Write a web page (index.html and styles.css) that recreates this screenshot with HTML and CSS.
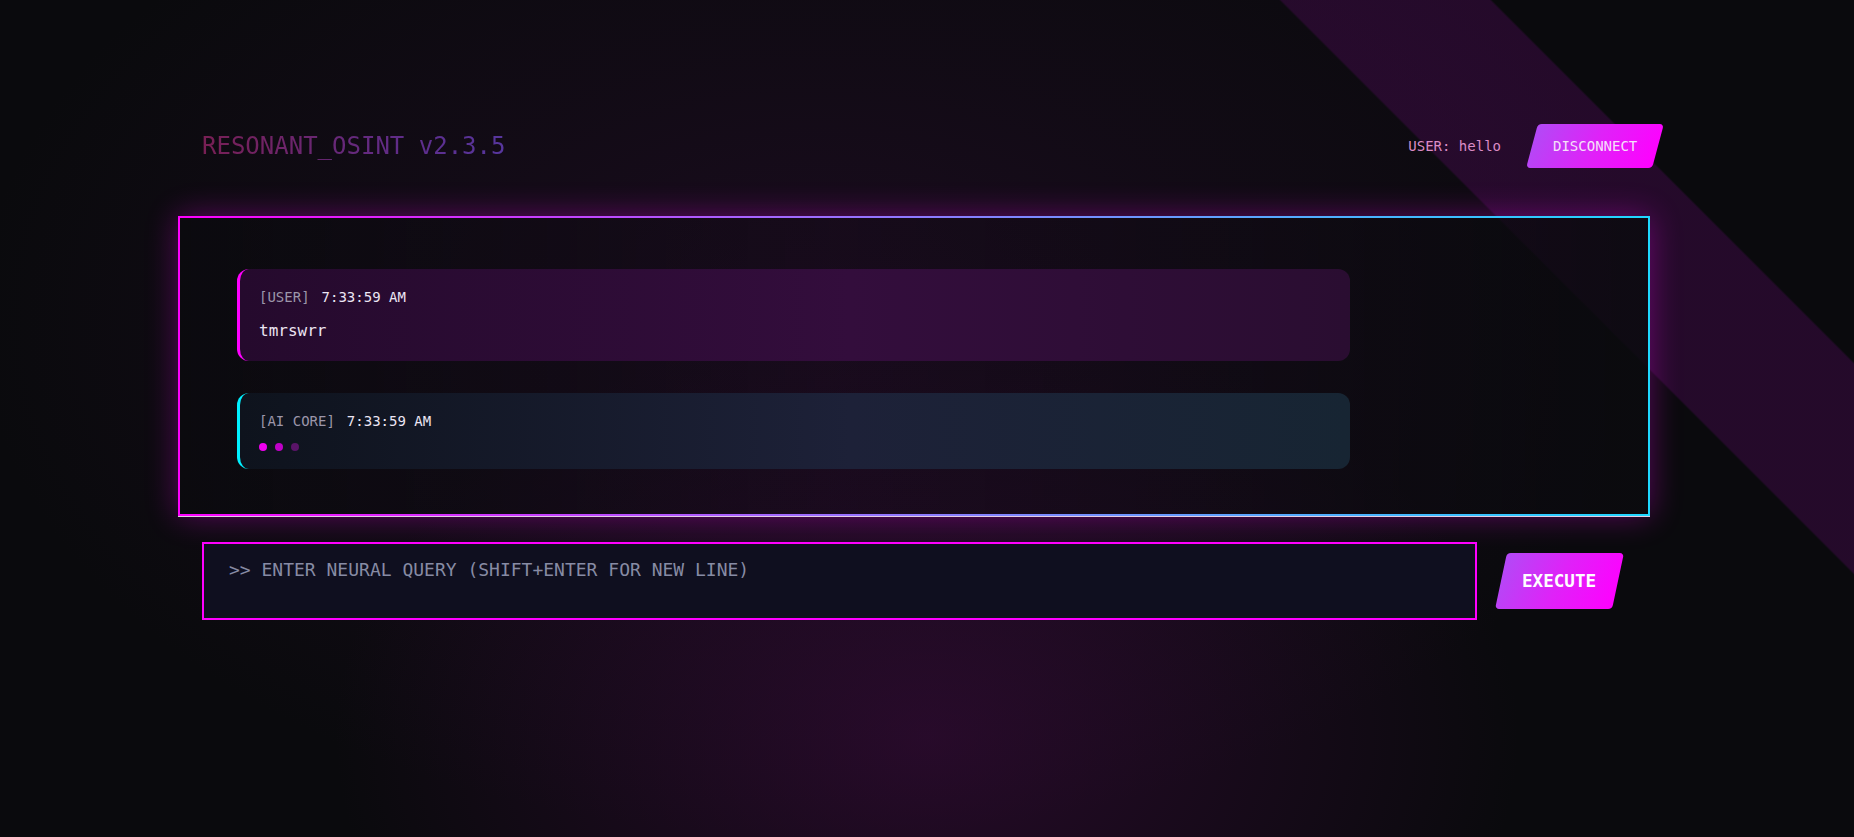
FILE: index.html
```html
<!DOCTYPE html>
<html lang="en">
<head>
<meta charset="utf-8">
<title>RESONANT_OSINT</title>
<link rel="stylesheet" href="styles.css">
</head>
<body>
<div class="app">
  <header class="topbar">
    <h1 class="brand">RESONANT_OSINT v2.3.5</h1>
    <div class="session">
      <span class="user">USER: hello</span>
      <button class="btn btn-disconnect"><span>DISCONNECT</span></button>
    </div>
  </header>

  <main class="panel">
    <div class="msg msg-user">
      <div class="meta"><span class="who">[USER]</span><span class="time">7:33:59 AM</span></div>
      <div class="text">tmrswrr</div>
    </div>
    <div class="msg msg-ai">
      <div class="meta"><span class="who">[AI CORE]</span><span class="time">7:33:59 AM</span></div>
      <div class="typing"><i class="d1"></i><i class="d2"></i><i class="d3"></i></div>
    </div>
  </main>

  <div class="composer">
    <textarea class="query" placeholder=">> ENTER NEURAL QUERY (SHIFT+ENTER FOR NEW LINE)"></textarea>
    <button class="btn btn-exec"><span>EXECUTE</span></button>
  </div>
</div>
</body>
</html>
```
FILE: styles.css
```css
html, body {
  margin: 0;
  height: 100%;
}

body {
  font-family: "DejaVu Sans Mono", "Liberation Mono", monospace;
  overflow: hidden;
  background:
    linear-gradient(45deg, transparent 1496px, rgba(80, 10, 90, 0.38) 1498px, rgba(80, 10, 90, 0.38) 1645px, transparent 1647px),
    radial-gradient(ellipse 760px 540px at 50% 88%, rgba(72, 10, 74, 0.45), transparent 78%),
    radial-gradient(ellipse 1050px 650px at 44% 38%, rgba(48, 14, 54, 0.42), transparent 80%),
    #0a0a0d;
}

.app {
  padding-top: 124px;
}

/* header */
.topbar {
  display: flex;
  justify-content: space-between;
  align-items: center;
  margin-left: 202px;
  width: 1456px;
  height: 44px;
}

.brand {
  margin: 0;
  font-size: 24px;
  font-weight: normal;
  line-height: 32px;
  background: linear-gradient(90deg, #781f54 0%, #5e2d8c 70%, #57369e 100%);
  -webkit-background-clip: text;
  background-clip: text;
  color: transparent;
}

.session {
  display: flex;
  align-items: center;
  gap: 31px;
}

.user {
  font-size: 14px;
  color: #dc8cc6;
}

/* skewed buttons */
.btn {
  border: 0;
  padding: 0;
  font-family: inherit;
  cursor: pointer;
  border-radius: 4px;
  background: linear-gradient(105deg, #b24af6 0%, #df22f8 50%, #ff00ff 100%);
  transform: skewX(-15deg);
}

.btn > span {
  display: inline-block;
  transform: skewX(15deg);
}

.btn-disconnect {
  width: 126px;
  height: 44px;
  font-size: 14px;
  color: #f6e0f9;
}

.btn-exec {
  width: 117px;
  height: 56px;
  font-size: 17.6px;
  font-weight: bold;
  color: #ffffff;
  transform: skewX(-12deg);
}

.btn-exec > span {
  transform: skewX(12deg);
}

/* chat panel */
.panel {
  box-sizing: border-box;
  margin: 48px 0 0 178px;
  width: 1472px;
  height: 300px;
  padding: 51px 0 0 57px;
  display: flex;
  flex-direction: column;
  gap: 32px;
  border: 2px solid #ff00ff;
  border-image: linear-gradient(90deg, #ff00ff 0%, #a466ff 40%, #1ed8ff 100%) 1;
  background: linear-gradient(90deg, rgba(10, 10, 14, 0.8) 0%, rgba(22, 10, 26, 0.45) 45%, rgba(14, 10, 18, 0.6) 75%, rgba(10, 10, 14, 0.85) 100%);
  box-shadow: 0 1px 0 rgba(255, 240, 255, 0.85), 0 0 30px rgba(255, 0, 255, 0.32);
}

.msg {
  box-sizing: border-box;
  width: 1113px;
  padding: 18px 19px;
  border-left: 3px solid;
  border-radius: 12px;
}

.msg-user {
  border-left-color: #ff00ff;
  background: linear-gradient(90deg, #250a2d 0%, #330d3c 55%, #2a0d31 100%);
}

.msg-ai {
  border-left-color: #00f0ff;
  background: linear-gradient(90deg, #0e131d 0%, #1d2138 55%, #172533 100%);
}

.meta {
  display: flex;
  gap: 12px;
  font-size: 14px;
  line-height: 20px;
}

.who {
  color: #9c96aa;
}

.time {
  color: #ece6f4;
}

.text {
  margin-top: 12px;
  font-size: 16px;
  line-height: 24px;
  color: #ece4f2;
}

.typing {
  margin-top: 12px;
  display: flex;
  gap: 8px;
  height: 8px;
}

.typing i {
  width: 8px;
  height: 8px;
  border-radius: 50%;
  background: #f000f0;
}

.typing .d2 {
  background: #c000c8;
}

.typing .d3 {
  background: #5a1468;
}

/* composer */
.composer {
  display: flex;
  align-items: center;
  gap: 24px;
  margin: 26px 0 0 202px;
}

.query {
  display: block;
  box-sizing: border-box;
  width: 1275px;
  height: 78px;
  padding: 14px 25px;
  border: 2px solid #ff00ff;
  background: #0f0f1f;
  font-family: inherit;
  font-size: 18px;
  line-height: 24px;
  color: #e0e0ea;
  resize: none;
  outline: none;
}

.query::placeholder {
  color: #878ba4;
  opacity: 1;
}
```
